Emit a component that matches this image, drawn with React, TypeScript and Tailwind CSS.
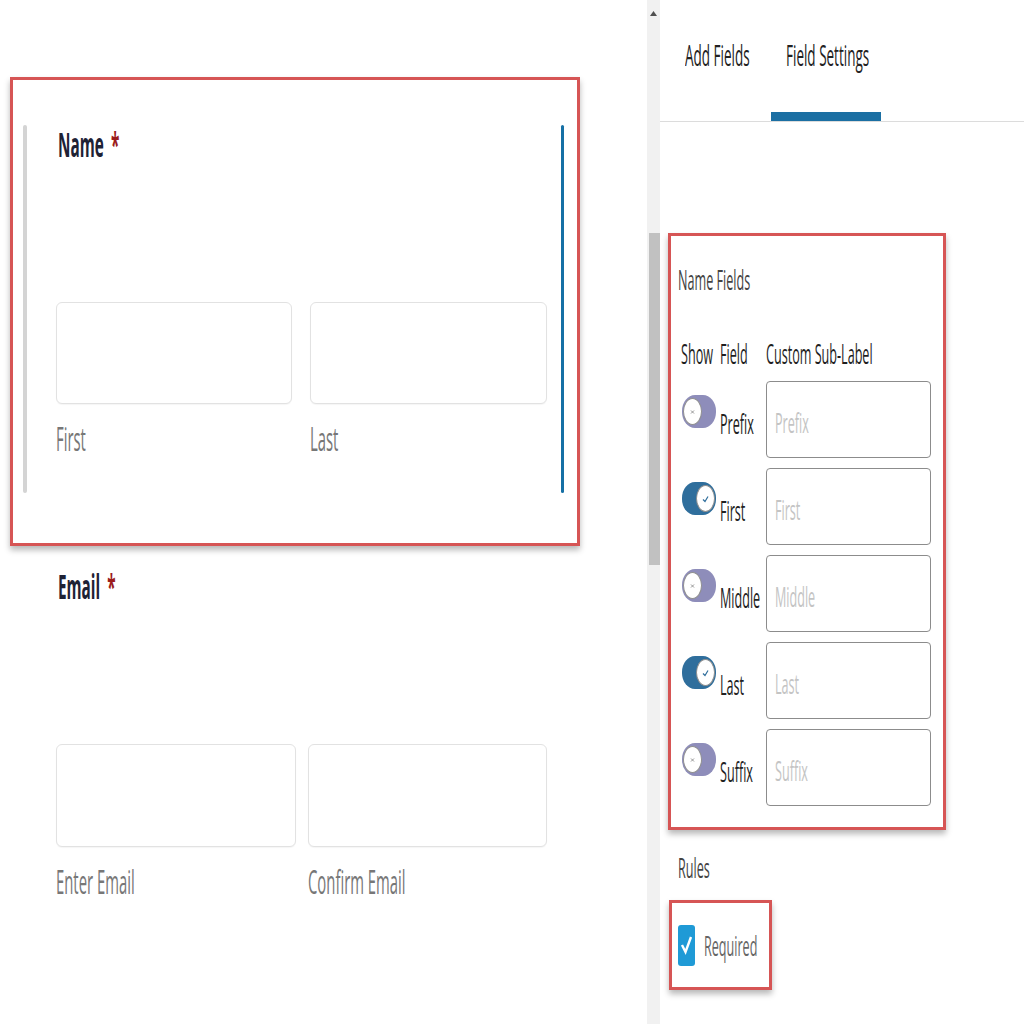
import type { ReactNode } from 'react';

// text in the reference is squeezed sideways, so every label gets the same x-scale
function Sq({ children, className }: { children: ReactNode; className?: string }) {
  return (
    <span className={`inline-block origin-left scale-x-[0.45] whitespace-nowrap leading-none ${className ?? ''}`}>
      {children}
    </span>
  );
}

function Heading({ label }: { label: string }) {
  return (
    <div className="ml-[2px] flex h-[34px]">
      <Sq className="text-[34px] font-bold text-[#1e2235]">
        {label}
        <span className="ml-[16px] text-[#9b1c1c]">*</span>
      </Sq>
    </div>
  );
}

function Box({ width, height }: { width: string; height: string }) {
  return (
    <div
      className={`${width} ${height} shrink-0 rounded-[6px] border border-[#e2e2e2] bg-white shadow-[0_1px_1px_rgba(0,0,0,0.04)]`}
    />
  );
}

function SubLabel({ width, text }: { width: string; text: string }) {
  return (
    <div className={`${width} flex h-[33px] shrink-0`}>
      <Sq className="text-[33px] text-[#777]">{text}</Sq>
    </div>
  );
}

function Toggle({ on }: { on: boolean }) {
  return (
    <div
      className={`flex h-[33px] w-[34px] items-center rounded-[13px/16px] px-[1px] ${
        on ? 'justify-end bg-[#2f6e9c]' : 'justify-start bg-[#8e8dba]'
      }`}
    >
      <div className="flex h-[27px] w-[19px] items-center justify-center rounded-[50%] border border-[#8f8f8f] bg-white">
        {on ? (
          <svg width="7" height="8" viewBox="0 0 7 8">
            <path d="M1 4.5 L3 6.5 L6 1.5" fill="none" stroke="#2f6e9c" strokeWidth="1.2" />
          </svg>
        ) : (
          <svg width="5" height="6" viewBox="0 0 5 6">
            <path d="M1 1.5 L4 4.5 M4 1.5 L1 4.5" stroke="#8a8a8a" strokeWidth="0.9" />
          </svg>
        )}
      </div>
    </div>
  );
}

const rows: { name: string; on: boolean }[] = [
  { name: 'Prefix', on: false },
  { name: 'First', on: true },
  { name: 'Middle', on: false },
  { name: 'Last', on: true },
  { name: 'Suffix', on: false },
];

function Row({ name, on }: { name: string; on: boolean }) {
  return (
    <div className="flex h-[77px] items-center">
      <div className="h-full w-[42px] shrink-0 pl-[4px] pt-[14px]">
        <Toggle on={on} />
      </div>
      <div className="mt-[6px] flex h-[28px] w-[46px] shrink-0">
        <Sq className="text-[28px] text-[#222]">{name}</Sq>
      </div>
      <div className="flex h-full w-[165px] shrink-0 items-center rounded-[4px] border border-[#8c8c8c] pl-[8px]">
        <div className="mt-[4px] flex h-[28px]">
          <Sq className="text-[28px] text-[#c4c4c4]">{name}</Sq>
        </div>
      </div>
    </div>
  );
}

export default function App() {
  return (
    <div className="flex h-[1024px] w-[1024px] overflow-hidden bg-white font-['Open_Sans',sans-serif]">
      {/* form preview */}
      <div className="flex w-[647px] shrink-0 flex-col">
        <div className="ml-[10px] mt-[77px] h-[469px] w-[570px] border-[3px] border-[#d65555] pl-[10px] pr-[13px] pt-[45px] shadow-[0_4px_6px_rgba(0,0,0,0.28)]">
          <div className="flex h-[368px]">
            <div className="w-[4px] rounded-full bg-[#d4d4d4]" />
            <div className="flex-1 pl-[29px] pt-[2px]">
              <Heading label="Name" />
              <div className="mt-[141px] flex gap-[18px]">
                <Box width="w-[236px]" height="h-[102px]" />
                <Box width="w-[237px]" height="h-[102px]" />
              </div>
              <div className="mt-[18px] flex gap-[18px]">
                <SubLabel width="w-[236px]" text="First" />
                <SubLabel width="w-[237px]" text="Last" />
              </div>
            </div>
            <div className="w-[3px] rounded-full bg-[#1670a5]" />
          </div>
        </div>

        <div className="mt-[23px] pl-[56px]">
          <Heading label="Email" />
          <div className="mt-[141px] flex gap-[12px]">
            <Box width="w-[240px]" height="h-[103px]" />
            <Box width="w-[239px]" height="h-[103px]" />
          </div>
          <div className="mt-[18px] flex gap-[12px]">
            <SubLabel width="w-[240px]" text="Enter Email" />
            <SubLabel width="w-[239px]" text="Confirm Email" />
          </div>
        </div>
      </div>

      {/* scrollbar */}
      <div className="flex w-[13px] shrink-0 flex-col items-center bg-[#f1f1f1]">
        <svg className="mt-[11px]" width="7" height="5" viewBox="0 0 7 5">
          <path d="M3.5 0 L7 5 H0 Z" fill="#505050" />
        </svg>
        <div className="ml-[1px] mt-[217px] h-[332px] w-[11px] bg-[#c1c1c1]" />
      </div>

      {/* settings panel */}
      <div className="flex flex-1 flex-col">
        <div className="flex h-[122px] border-b border-[#dcdcdc] pl-[25px]">
          <div className="w-[86px] shrink-0 pt-[40px]">
            <div className="flex h-[30px]">
              <Sq className="text-[30px] text-[#222]">Add Fields</Sq>
            </div>
          </div>
          <div className="flex w-[110px] shrink-0 flex-col justify-between pt-[40px]">
            <div className="flex h-[30px] pl-[15px]">
              <Sq className="text-[30px] text-[#222]">Field Settings</Sq>
            </div>
            <div className="h-[9px] bg-[#1b6fa3]" />
          </div>
        </div>

        <div className="ml-[8px] mt-[111px] h-[597px] w-[278px] border-[3px] border-[#d65555] px-[7px] pt-[29px] shadow-[0_4px_6px_rgba(0,0,0,0.28)]">
          <div className="flex h-[28px]">
            <Sq className="text-[28px] text-[#444]">Name Fields</Sq>
          </div>
          <div className="mt-[46px] flex h-[28px]">
            <div className="flex w-[42px] shrink-0 pl-[3px]">
              <Sq className="text-[28px] font-medium text-[#1e1e1e]">Show</Sq>
            </div>
            <div className="flex w-[46px] shrink-0">
              <Sq className="text-[28px] font-medium text-[#1e1e1e]">Field</Sq>
            </div>
            <div className="flex">
              <Sq className="text-[28px] font-medium text-[#1e1e1e]">Custom Sub-Label</Sq>
            </div>
          </div>
          <div className="mt-[14px] flex flex-col gap-[10px]">
            {rows.map((r) => (
              <Row key={r.name} name={r.name} on={r.on} />
            ))}
          </div>
        </div>

        <div className="mt-[23px] flex h-[28px] pl-[18px]">
          <Sq className="text-[28px] text-[#444]">Rules</Sq>
        </div>

        <div className="ml-[9px] mt-[19px] flex h-[90px] w-[103px] items-center border-[3px] border-[#d65555] pl-[6px] shadow-[0_4px_6px_rgba(0,0,0,0.28)]">
          <div className="flex h-[41px] w-[17px] shrink-0 items-center justify-center rounded-[3px] bg-[#1f9ad6]">
            <svg width="13" height="24" viewBox="0 0 13 24">
              <path d="M2 12 L5.5 19 L11 4" fill="none" stroke="#fff" strokeWidth="2.4" />
            </svg>
          </div>
          <div className="ml-[9px] flex h-[28px]">
            <Sq className="text-[28px] text-[#666]">Required</Sq>
          </div>
        </div>
      </div>
    </div>
  );
}
